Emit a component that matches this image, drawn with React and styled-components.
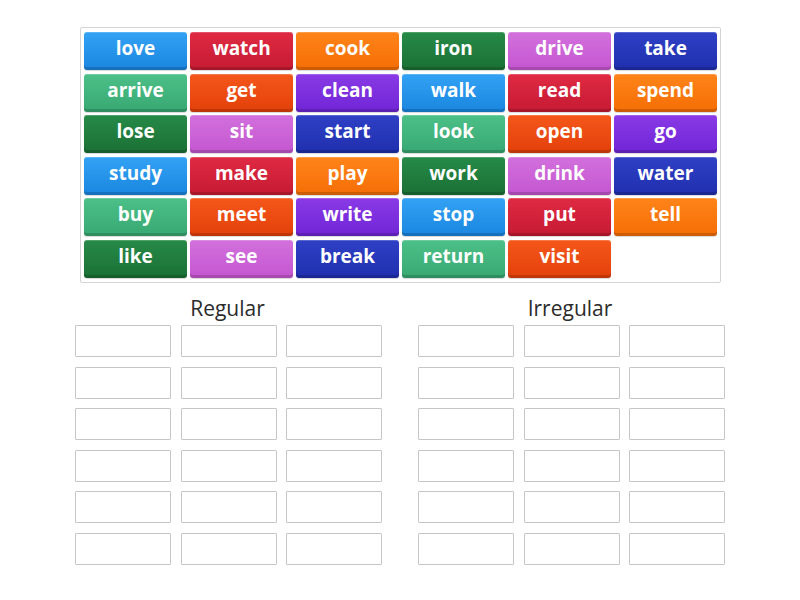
import React from 'react';
import styled, { createGlobalStyle } from 'styled-components';

const GlobalStyle = createGlobalStyle`
  body {
    margin: 0;
    background: #fff;
    font-family: "Open Sans", "Liberation Sans", sans-serif;
  }
`

const palette = {
  blue: ['#33a2f4', '#1a86e0'],
  red: ['#e02a43', '#c61a33'],
  orange: ['#ff8419', '#f56e06'],
  darkGreen: ['#268a47', '#1b7035'],
  pink: ['#d370dd', '#c456d0'],
  darkBlue: ['#2f40c6', '#1f2fae'],
  green: ['#4cc088', '#38a872'],
  orangeRed: ['#f5571a', '#e3400a'],
  purple: ['#8a3ae6', '#7025d6'],
}

const cycle = ['blue', 'red', 'orange', 'darkGreen', 'pink', 'darkBlue', 'green', 'orangeRed', 'purple']

const words = [
  'love', 'watch', 'cook', 'iron', 'drive', 'take',
  'arrive', 'get', 'clean', 'walk', 'read', 'spend',
  'lose', 'sit', 'start', 'look', 'open', 'go',
  'study', 'make', 'play', 'work', 'drink', 'water',
  'buy', 'meet', 'write', 'stop', 'put', 'tell',
  'like', 'see', 'break', 'return', 'visit',
]

const Page = styled.div`
  width: 800px;
  height: 600px;
  display: flex;
  flex-direction: column;
  align-items: center;
  padding-top: 27px;
  box-sizing: border-box;
`

const Bank = styled.div`
  display: grid;
  grid-template-columns: repeat(6, 103px);
  grid-auto-rows: 38px;
  column-gap: 3px;
  row-gap: 3.6px;
  padding: 4px 3px 4px 3px;
  border: 1px solid #d4d4d4;
  border-radius: 2px;
  margin-left: 1px;
`

const Tile = styled.div`
  display: flex;
  align-items: center;
  justify-content: center;
  padding-bottom: 6px;
  box-sizing: border-box;
  border-radius: 3px;
  color: #fff;
  font-weight: 700;
  font-size: 19px;
  background: linear-gradient(${({ c }) => palette[c][0]}, ${({ c }) => palette[c][1]});
  box-shadow: inset 0 -3px 0 rgba(0, 0, 0, 0.16), inset 0 1px 0 rgba(255, 255, 255, 0.2), 0 1px 1px rgba(0, 0, 0, 0.15);
`

const Groups = styled.div`
  display: flex;
  gap: 36px;
  margin-top: 13px;
`

const Group = styled.div`
  display: flex;
  flex-direction: column;
  align-items: center;
`

const Heading = styled.div`
  font-size: 21px;
  line-height: 24px;
  color: #2b2b2b;
  margin-bottom: 5px;
  margin-left: ${({ shift }) => shift || 0}px;
`

const Slots = styled.div`
  display: grid;
  grid-template-columns: repeat(3, 96px);
  grid-auto-rows: 32px;
  column-gap: 9.5px;
  row-gap: 9.6px;
`

const Slot = styled.div`
  border: 1px solid #c6c6c6;
  border-radius: 1px;
  box-sizing: border-box;
`

const DropGroup = ({ title, shift }) => (
  <Group>
    <Heading shift={shift}>{title}</Heading>
    <Slots>
      {Array.from({ length: 18 }).map((_, i) => <Slot key={i} />)}
    </Slots>
  </Group>
)

const App = () => (
  <>
    <GlobalStyle />
    <Page>
      <Bank>
        {words.map((w, i) => (
          <Tile key={w} c={cycle[i % cycle.length]}>{w}</Tile>
        ))}
      </Bank>
      <Groups>
        <DropGroup title="Regular" shift={-2} />
        <DropGroup title="Irregular" shift={-3} />
      </Groups>
    </Page>
  </>
)

export default App;
